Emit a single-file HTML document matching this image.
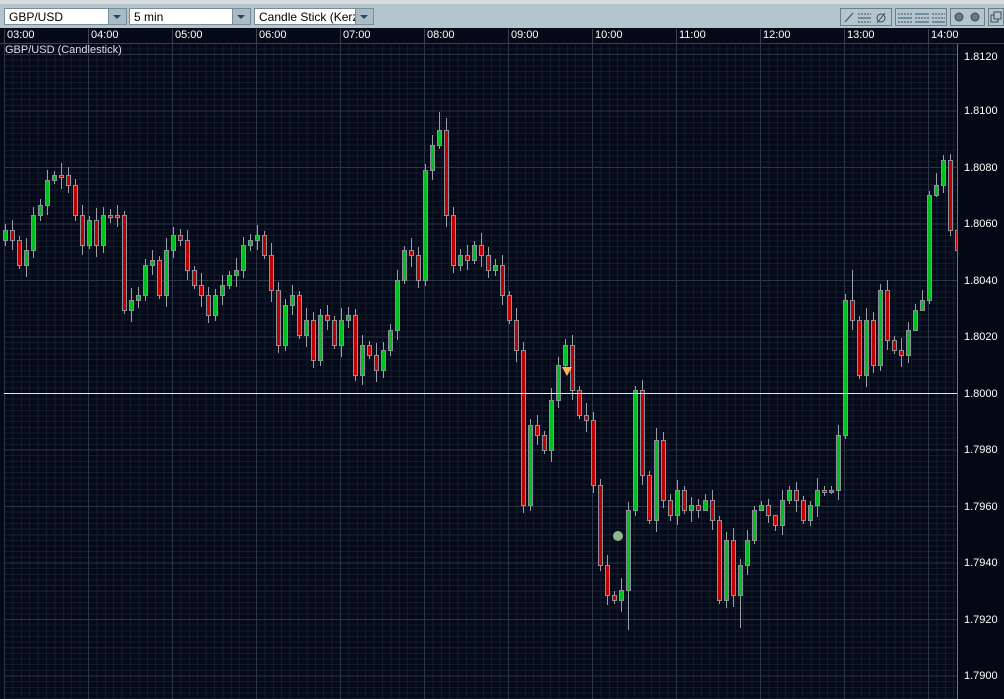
<!DOCTYPE html>
<html><head><meta charset="utf-8"><style>
body{margin:0;width:1004px;height:699px;overflow:hidden;background:#050a18;font-family:"Liberation Sans",sans-serif;position:relative}
#top{position:absolute;left:0;top:0;width:1004px;height:4px;background:#d8dcdf}
#tb{position:absolute;left:0;top:4px;width:1004px;height:24px;background:#b3c6ce;z-index:5}
.dd{position:absolute;top:4px;height:17px;background:#fff;border:1px solid #7c8c94;font-size:12px;line-height:16px;padding-left:4px;box-sizing:border-box;overflow:hidden;white-space:nowrap;color:#000}
.dd b{position:absolute;right:0;top:0;width:17px;height:15px;background:#a7bcc6;border-left:1px solid #7c8c94}
.dd b:after{content:"";position:absolute;left:4px;top:6px;border-left:4px solid transparent;border-right:4px solid transparent;border-top:4px solid #25485e}
.ic{position:absolute;top:4px;height:18px;border:1px solid #6e7e86;box-sizing:border-box}
#axis{position:absolute;left:0;top:28px;width:1004px;height:16px;background:#050a18;border-bottom:1px solid #3a4454;box-sizing:border-box}
#axis span{position:absolute;top:1px;color:#fff;font-size:11px;border-left:1px solid #3a4454;padding-left:2px;height:15px}
#grid{position:absolute;left:4px;top:44px;width:953px;height:655px;
background:
repeating-linear-gradient(180deg,transparent 0 10px,#2c3646 10px 11px,transparent 11px 56.5px),
repeating-linear-gradient(90deg,#2c3646 0 1px,transparent 1px 84px),
repeating-linear-gradient(180deg,transparent 0 4.35px,#141c2c 4.35px 5.35px,transparent 5.35px 5.65px),
repeating-linear-gradient(90deg,#141c2c 0 1px,transparent 1px 8.4px);}
#pa{position:absolute;left:957px;top:44px;width:47px;height:655px;background:#020814;border-left:1px solid #6c7480}
#pa span{position:absolute;left:6px;color:#fff;font-size:11px}
#ch{position:absolute;left:0;top:0}
</style></head><body>
<div id="top"></div>
<div id="tb">
<div class="dd" style="left:4px;width:123px">GBP/USD<b></b></div>
<div class="dd" style="left:129px;width:122px">5 min<b></b></div>
<div class="dd" style="left:254px;width:120px">Candle Stick (Kerzen<b></b></div>
<div class="ic" style="left:840px;width:52px"></div>
<div class="ic" style="left:895px;width:52px"></div>
<div class="ic" style="left:950px;width:35px"></div>
<div class="ic" style="left:988px;width:16px"></div>
<svg width="1004" height="24" style="position:absolute;left:0;top:0">
<g stroke="#3a4a52" stroke-width="1" fill="none">
<line x1="845" y1="18" x2="853" y2="9"/><line x1="858" y1="10" x2="871" y2="10" stroke-dasharray="2 1"/><line x1="858" y1="14" x2="871" y2="14"/><line x1="858" y1="18" x2="871" y2="18" stroke-dasharray="2 1"/>
<circle cx="881" cy="14" r="4"/><line x1="877" y1="19" x2="885" y2="9"/>
<line x1="898" y1="10" x2="912" y2="10" stroke-dasharray="2 1"/><line x1="898" y1="14" x2="912" y2="14" stroke="#2a5a78"/><line x1="898" y1="18" x2="912" y2="18" stroke-dasharray="2 1"/>
<line x1="915" y1="10" x2="929" y2="10" stroke="#2a5a78"/><line x1="915" y1="14" x2="929" y2="14" stroke-dasharray="2 1"/><line x1="915" y1="18" x2="929" y2="18" stroke="#2a5a78"/>
<line x1="932" y1="10" x2="945" y2="10" stroke-dasharray="2 1"/><line x1="932" y1="14" x2="945" y2="14" stroke-dasharray="2 1"/><line x1="932" y1="18" x2="945" y2="18" stroke="#2a5a78"/>
<circle cx="959" cy="13" r="4" fill="#6a7a82"/><circle cx="975" cy="13" r="4" fill="#6a7a82"/>
<rect x="991" y="11" width="7" height="7"/><rect x="994" y="8" width="7" height="7" fill="#b3c6ce"/>
</g></svg>
</div>
<div id="axis">
<span style="left:4px">03:00</span><span style="left:88px">04:00</span><span style="left:172px">05:00</span><span style="left:256px">06:00</span><span style="left:340px">07:00</span><span style="left:424px">08:00</span><span style="left:508px">09:00</span><span style="left:592px">10:00</span><span style="left:676px">11:00</span><span style="left:760px">12:00</span><span style="left:844px">13:00</span><span style="left:928px">14:00</span>
</div>
<div id="grid"></div>
<div id="pa">
<span style="top:7px">1.8120</span><span style="top:61px">1.8100</span><span style="top:118px">1.8080</span><span style="top:174px">1.8060</span><span style="top:231px">1.8040</span><span style="top:287px">1.8020</span><span style="top:344px">1.8000</span><span style="top:400px">1.7980</span><span style="top:457px">1.7960</span><span style="top:513px">1.7940</span><span style="top:570px">1.7920</span><span style="top:626px">1.7900</span>
</div>
<div style="position:absolute;left:5px;top:44px;color:#dde;font-size:11px">GBP/USD (Candlestick)</div>
<svg id="ch" width="957" height="699">
<path fill="none" stroke="#9aa0a8" stroke-width="1" d="M5.5 224V246M12.5 220V250M19.5 236V269M26.5 238V277M33.5 207V258M40.5 199V221M47.5 170V215M54.5 171V184M61.5 163V189M68.5 167V193M75.5 179V221M82.5 205V255M89.5 216V249M96.5 208V257M103.5 207V253M110.5 209V223M117.5 205V227M124.5 211V314M131.5 288V322M138.5 287V308M145.5 259V301M152.5 250V275M159.5 256V299M166.5 238V307M173.5 227V258M180.5 229V246M187.5 230V280M194.5 266V289M201.5 273V307M208.5 287V323M215.5 289V321M222.5 275V305M229.5 271V289M236.5 258V287M243.5 237V278M250.5 234V251M257.5 225V250M264.5 231V259M271.5 243V302M278.5 282V353M285.5 299V351M292.5 285V315M299.5 291V339M306.5 308V347M313.5 312V368M320.5 309V366M327.5 305V330M334.5 316V349M341.5 308V357M348.5 307V328M355.5 309V381M362.5 335V385M369.5 341V359M376.5 343V382M383.5 342V378M390.5 324V356M397.5 270V340M404.5 246V284M411.5 238V267M418.5 247V288M425.5 164V286M432.5 135V180M439.5 112V149M446.5 118V227M453.5 207V273M460.5 249V271M467.5 245V270M474.5 241V264M481.5 233V267M488.5 247V278M495.5 259V276M502.5 255V305M509.5 291V324M516.5 308V362M523.5 342V513M530.5 419V511M537.5 415V445M544.5 431V454M551.5 388V462M558.5 357V408M565.5 339V371M572.5 335V400M579.5 386V419M586.5 403V432M593.5 412V493M600.5 479V571M607.5 555V605M614.5 591V604M621.5 578V612M628.5 502V630M635.5 386V516M642.5 380V485M649.5 471V524M656.5 428V532M663.5 432V508M670.5 494V521M677.5 480V525M684.5 486V514M691.5 497V522M698.5 499V518M705.5 494V506M712.5 490V530M719.5 516V604M726.5 532V608M733.5 528V607M740.5 559V628M747.5 530V575M754.5 506V544M761.5 501V509M768.5 499V523M775.5 519V531M782.5 490V535M789.5 486V504M796.5 482V512M803.5 496V524M810.5 501V526M817.5 478V517M824.5 486V496M831.5 486V494M838.5 425V500M845.5 294V439M852.5 270V330M859.5 316V379M866.5 308V387M873.5 312V373M880.5 284V371M887.5 280V350M894.5 336V354M901.5 338V367M908.5 322V363M915.5 304V316M922.5 290V310M929.5 191V304M936.5 173V197M943.5 155V193M950.5 154V236"/>
<g fill="#00c020" stroke="#8c9098" stroke-width="1">
<rect x="3.5" y="230.5" width="4" height="10"/><rect x="24.5" y="250.5" width="4" height="15"/><rect x="31.5" y="215.5" width="4" height="35"/><rect x="38.5" y="205.5" width="4" height="10"/><rect x="45.5" y="180.5" width="4" height="25"/><rect x="52.5" y="175.5" width="4" height="5"/><rect x="87.5" y="220.5" width="4" height="25"/><rect x="101.5" y="215.5" width="4" height="30"/><rect x="129.5" y="300.5" width="4" height="10"/><rect x="136.5" y="295.5" width="4" height="5"/><rect x="143.5" y="265.5" width="4" height="30"/><rect x="150.5" y="260.5" width="4" height="5"/><rect x="164.5" y="250.5" width="4" height="45"/><rect x="171.5" y="235.5" width="4" height="15"/><rect x="213.5" y="295.5" width="4" height="20"/><rect x="220.5" y="285.5" width="4" height="10"/><rect x="227.5" y="275.5" width="4" height="10"/><rect x="234.5" y="270.5" width="4" height="5"/><rect x="241.5" y="245.5" width="4" height="25"/><rect x="248.5" y="240.5" width="4" height="5"/><rect x="255.5" y="235.5" width="4" height="5"/><rect x="283.5" y="305.5" width="4" height="40"/><rect x="290.5" y="295.5" width="4" height="10"/><rect x="304.5" y="320.5" width="4" height="15"/><rect x="318.5" y="315.5" width="4" height="45"/><rect x="339.5" y="320.5" width="4" height="25"/><rect x="346.5" y="315.5" width="4" height="5"/><rect x="360.5" y="345.5" width="4" height="30"/><rect x="381.5" y="350.5" width="4" height="20"/><rect x="388.5" y="330.5" width="4" height="20"/><rect x="395.5" y="280.5" width="4" height="50"/><rect x="402.5" y="250.5" width="4" height="30"/><rect x="423.5" y="170.5" width="4" height="110"/><rect x="430.5" y="145.5" width="4" height="25"/><rect x="437.5" y="130.5" width="4" height="15"/><rect x="458.5" y="255.5" width="4" height="10"/><rect x="472.5" y="245.5" width="4" height="15"/><rect x="493.5" y="265.5" width="4" height="5"/><rect x="528.5" y="425.5" width="4" height="80"/><rect x="549.5" y="400.5" width="4" height="50"/><rect x="556.5" y="365.5" width="4" height="35"/><rect x="563.5" y="345.5" width="4" height="20"/><rect x="619.5" y="590.5" width="4" height="10"/><rect x="626.5" y="510.5" width="4" height="80"/><rect x="633.5" y="390.5" width="4" height="120"/><rect x="654.5" y="440.5" width="4" height="80"/><rect x="675.5" y="490.5" width="4" height="25"/><rect x="689.5" y="505.5" width="4" height="5"/><rect x="703.5" y="500.5" width="4" height="10"/><rect x="724.5" y="540.5" width="4" height="60"/><rect x="738.5" y="565.5" width="4" height="30"/><rect x="745.5" y="540.5" width="4" height="25"/><rect x="752.5" y="510.5" width="4" height="30"/><rect x="759.5" y="505.5" width="4" height="5"/><rect x="780.5" y="500.5" width="4" height="25"/><rect x="787.5" y="490.5" width="4" height="10"/><rect x="808.5" y="505.5" width="4" height="15"/><rect x="815.5" y="490.5" width="4" height="15"/><rect x="829.5" y="490.5" width="4" height="2"/><rect x="836.5" y="435.5" width="4" height="55"/><rect x="843.5" y="300.5" width="4" height="135"/><rect x="864.5" y="320.5" width="4" height="55"/><rect x="878.5" y="290.5" width="4" height="75"/><rect x="906.5" y="330.5" width="4" height="25"/><rect x="913.5" y="310.5" width="4" height="20"/><rect x="920.5" y="300.5" width="4" height="10"/><rect x="927.5" y="195.5" width="4" height="105"/><rect x="934.5" y="185.5" width="4" height="10"/><rect x="941.5" y="160.5" width="4" height="25"/>
</g>
<g fill="#c00000" stroke="#8c9098" stroke-width="1">
<rect x="10.5" y="230.5" width="4" height="10"/><rect x="17.5" y="240.5" width="4" height="25"/><rect x="59.5" y="175.5" width="4" height="2"/><rect x="66.5" y="175.5" width="4" height="10"/><rect x="73.5" y="185.5" width="4" height="30"/><rect x="80.5" y="215.5" width="4" height="30"/><rect x="94.5" y="220.5" width="4" height="25"/><rect x="108.5" y="215.5" width="4" height="2"/><rect x="115.5" y="215.5" width="4" height="2"/><rect x="122.5" y="215.5" width="4" height="95"/><rect x="157.5" y="260.5" width="4" height="35"/><rect x="178.5" y="235.5" width="4" height="5"/><rect x="185.5" y="240.5" width="4" height="30"/><rect x="192.5" y="270.5" width="4" height="15"/><rect x="199.5" y="285.5" width="4" height="10"/><rect x="206.5" y="295.5" width="4" height="20"/><rect x="262.5" y="235.5" width="4" height="20"/><rect x="269.5" y="255.5" width="4" height="35"/><rect x="276.5" y="290.5" width="4" height="55"/><rect x="297.5" y="295.5" width="4" height="40"/><rect x="311.5" y="320.5" width="4" height="40"/><rect x="325.5" y="315.5" width="4" height="5"/><rect x="332.5" y="320.5" width="4" height="25"/><rect x="353.5" y="315.5" width="4" height="60"/><rect x="367.5" y="345.5" width="4" height="10"/><rect x="374.5" y="355.5" width="4" height="15"/><rect x="409.5" y="250.5" width="4" height="5"/><rect x="416.5" y="255.5" width="4" height="25"/><rect x="444.5" y="130.5" width="4" height="85"/><rect x="451.5" y="215.5" width="4" height="50"/><rect x="465.5" y="255.5" width="4" height="5"/><rect x="479.5" y="245.5" width="4" height="10"/><rect x="486.5" y="255.5" width="4" height="15"/><rect x="500.5" y="265.5" width="4" height="30"/><rect x="507.5" y="295.5" width="4" height="25"/><rect x="514.5" y="320.5" width="4" height="30"/><rect x="521.5" y="350.5" width="4" height="155"/><rect x="535.5" y="425.5" width="4" height="10"/><rect x="542.5" y="435.5" width="4" height="15"/><rect x="570.5" y="345.5" width="4" height="45"/><rect x="577.5" y="390.5" width="4" height="25"/><rect x="584.5" y="415.5" width="4" height="5"/><rect x="591.5" y="420.5" width="4" height="65"/><rect x="598.5" y="485.5" width="4" height="80"/><rect x="605.5" y="565.5" width="4" height="30"/><rect x="612.5" y="595.5" width="4" height="5"/><rect x="640.5" y="390.5" width="4" height="85"/><rect x="647.5" y="475.5" width="4" height="45"/><rect x="661.5" y="440.5" width="4" height="60"/><rect x="668.5" y="500.5" width="4" height="15"/><rect x="682.5" y="490.5" width="4" height="20"/><rect x="696.5" y="505.5" width="4" height="5"/><rect x="710.5" y="500.5" width="4" height="20"/><rect x="717.5" y="520.5" width="4" height="80"/><rect x="731.5" y="540.5" width="4" height="55"/><rect x="766.5" y="505.5" width="4" height="10"/><rect x="773.5" y="515.5" width="4" height="10"/><rect x="794.5" y="490.5" width="4" height="10"/><rect x="801.5" y="500.5" width="4" height="20"/><rect x="822.5" y="490.5" width="4" height="2"/><rect x="850.5" y="300.5" width="4" height="20"/><rect x="857.5" y="320.5" width="4" height="55"/><rect x="871.5" y="320.5" width="4" height="45"/><rect x="885.5" y="290.5" width="4" height="50"/><rect x="892.5" y="340.5" width="4" height="10"/><rect x="899.5" y="350.5" width="4" height="5"/><rect x="948.5" y="160.5" width="4" height="70"/><rect x="955.5" y="230.5" width="4" height="20"/>
</g>
<line x1="4" y1="393.5" x2="957" y2="393.5" stroke="#f0f0d8"/>
<polygon points="562,367 572,367 567,376" fill="#ffb060"/>
<circle cx="618" cy="536" r="5" fill="#8cb88c"/>
</svg>
</body></html>
